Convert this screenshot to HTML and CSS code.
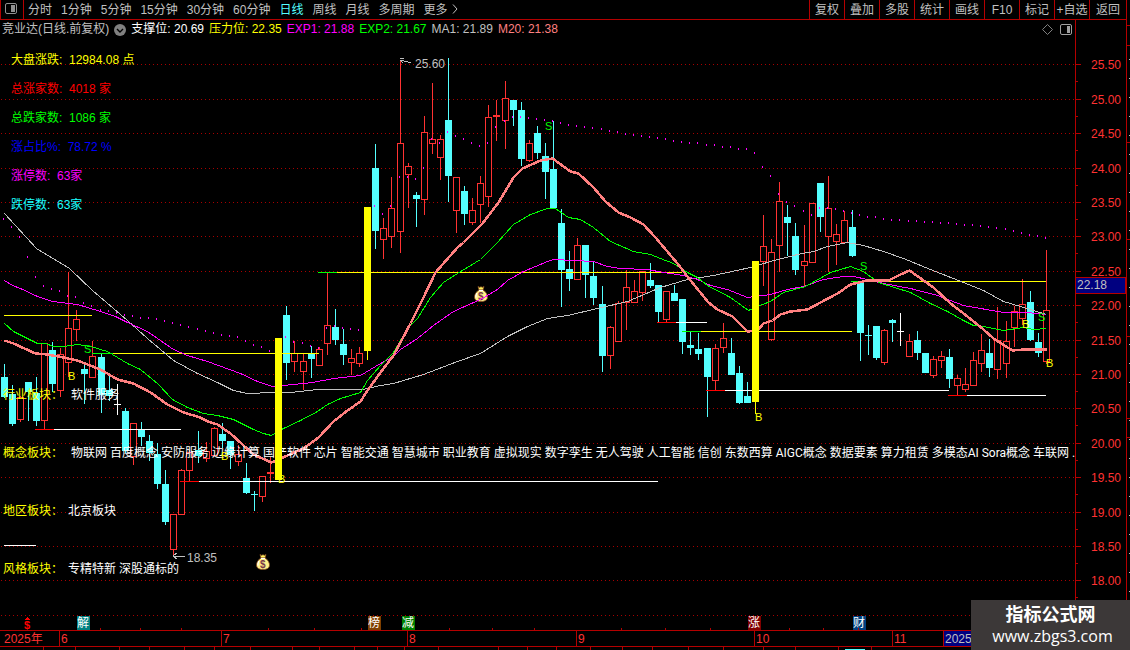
FILE: index.html
```html
<!DOCTYPE html>
<html lang="zh">
<head>
    <meta charset="UTF-8">
    <meta name="viewport" content="width=device-width, initial-scale=1.0">
    <title>竞业达 日线</title>
    <link rel="stylesheet" href="styles.css">
</head>
<body>
    <div class="app">
        <header class="toolbar">
            <button class="tool-icon" aria-label="侧栏">
                <svg width="12" height="11" viewBox="0 0 12 11"><rect x="0.5" y="0.5" width="11" height="10" rx="1.5" fill="none" stroke="#909090"/><rect x="6" y="2" width="4" height="7" fill="#909090"/></svg>
            </button>
            <nav class="periods">
                <button>分时</button>
                <button>1分钟</button>
                <button>5分钟</button>
                <button>15分钟</button>
                <button>30分钟</button>
                <button>60分钟</button>
                <button class="active">日线</button>
                <button>周线</button>
                <button>月线</button>
                <button>多周期</button>
                <button>更多<svg class="more" width="6" height="10" viewBox="0 0 6 10"><path d="M1 0.5L5 5L1 9.5" fill="none" stroke="currentColor"/></svg></button>
            </nav>
            <div class="actions">
                <button>复权</button>
                <button>叠加</button>
                <button>多股</button>
                <button>统计</button>
                <button>画线</button>
                <button>F10</button>
                <button>标记</button>
                <button>+自选</button>
                <button>返回</button>
            </div>
        </header>

        <main class="chart">
            <div class="info">
                <span class="grey">竞业达(日线.前复权)</span>
                <button class="drop" aria-label="指标菜单">
                    <svg width="12" height="12" viewBox="0 0 12 12"><circle cx="6" cy="6" r="6" fill="#808080"/><path d="M3 5L6 8L9 5" fill="none" stroke="#000" stroke-width="1.4"/></svg>
                </button>
                <span class="white">支撑位: 20.69</span>
                <span class="yellow">压力位: 22.35</span>
                <span class="magenta">EXP1: 21.88</span>
                <span class="green">EXP2: 21.67</span>
                <span class="grey">MA1: 21.89</span>
                <span class="salmon">M20: 21.38</span>
                <div class="info-icons">
                    <svg width="11" height="11" viewBox="0 0 11 11"><path d="M5.5 0.5L10.5 5.5L5.5 10.5L0.5 5.5Z" fill="none" stroke="#808080"/></svg>
                    <svg width="12" height="11" viewBox="0 0 12 11"><rect x="0.5" y="0.5" width="11" height="10" rx="1.5" fill="none" stroke="#a0a0a0"/><rect x="7" y="2" width="3" height="7" fill="#a0a0a0"/></svg>
                </div>
            </div>

            <div class="plot" id="plot">
                <svg id="layer-main"></svg>
                <ul class="market">
                    <li class="yellow">大盘涨跌:&nbsp; 12984.08 点</li>
                    <li class="red">总涨家数:&nbsp; 4018 家</li>
                    <li class="green">总跌家数:&nbsp; 1086 家</li>
                    <li class="blue">涨占比%:&nbsp; 78.72 %</li>
                    <li class="magenta">涨停数:&nbsp; 63家</li>
                    <li class="cyan">跌停数:&nbsp; 63家</li>
                </ul>
                <dl class="sectors">
                    <dt>行业板块：</dt><dd>&nbsp;软件服务</dd>
                    <dt>概念板块：</dt><dd>&nbsp;物联网 百度概念 安防服务 边缘计算 国产软件 芯片 智能交通 智慧城市 职业教育 虚拟现实 数字孪生 无人驾驶 人工智能 信创 东数西算 AIGC概念 数据要素 算力租赁 多模态AI Sora概念 车联网 .</dd>
                    <dt>地区板块：</dt><dd>北京板块</dd>
                    <dt>风格板块：</dt><dd>专精特新 深股通标的</dd>
                </dl>
                <svg id="layer-top"></svg>
            </div>

            <div class="prices">
                <svg id="price-axis"></svg>
            </div>

            <div class="dates">
                <span class="year">2025年</span>
                <span>6</span>
                <span>7</span>
                <span>8</span>
                <span>9</span>
                <span>10</span>
                <span>11</span>
                <span class="now">2025</span>
            </div>
        </main>

        <footer class="tabs">
            <i></i><i></i><i></i><i></i><i></i><i></i><i></i><i></i><i></i><i></i>
            <i></i><i></i><i></i><i></i><i></i><i></i><i></i><i></i><i></i><i></i>
            <i></i><i></i><i></i><i></i><i class="on"></i><i></i>
        </footer>
    </div>

    <aside class="side">
        <svg width="3" height="650" viewBox="0 0 3 650" shape-rendering="crispEdges">
            <path d="M0 25.5H3M0 45.5H3M0 142.5H3M0 239.5H3M0 336.5H3M0 418.5H3M0 437.5H3" stroke="#b40000"/>
            <path d="M2.5 59V650" stroke="#c0c0c0" stroke-dasharray="1 18"/>
        </svg>
    </aside>

    <div class="watermark">
        <strong>指标公式网</strong>
        <span>www.zbgs3.com</span>
    </div>

    <script src="chart.js"></script>
</body>
</html>
```
FILE: styles.css
```css
:root {
    --line: #b40000;
    --up: #ff3232;
    --down: #54ffff;
    --grey: #c0c0c0;
}

* {
    margin: 0;
    padding: 0;
    box-sizing: border-box;
}

html, body {
    width: 100%;
    height: 100%;
    overflow: hidden;
    background: #000;
}

body {
    display: flex;
    color: var(--grey);
    font-family: "Liberation Sans", "Noto Sans CJK SC", sans-serif;
    font-size: 12px;
}

button {
    background: none;
    border: none;
    color: inherit;
    font: inherit;
    white-space: nowrap;
    cursor: pointer;
}

svg {
    display: block;
}

.app {
    flex: 1;
    min-width: 0;
    height: 100%;
    display: flex;
    flex-direction: column;
}

/* 顶部工具栏 */
.toolbar {
    flex: none;
    display: flex;
    height: 20px;
    border-bottom: 1px solid var(--line);
    border-left: 1px solid var(--line);
}

.toolbar button {
    height: 19px;
    line-height: 19px;
}

.tool-icon {
    width: 23px;
    padding: 0 6px 2px 4px;
    border-right: 1px solid var(--line);
}

.periods {
    display: flex;
    gap: 9px;
    padding-top: 1px;
    padding-left: 4px;
}

.periods .active {
    color: var(--down);
}

.more {
    display: inline-block;
    margin-left: 4px;
}

.actions {
    display: flex;
    margin-left: auto;
}

.actions button {
    width: 35px;
    padding-top: 1px;
    border-left: 1px solid var(--line);
}

.actions button:last-child {
    width: 37px;
}

/* 主图 */
.chart {
    flex: 1;
    min-height: 0;
    display: grid;
    grid-template-columns: minmax(0, 1fr) 51px;
    grid-template-rows: 19px minmax(0, 1fr) 16px;
}

.info {
    display: flex;
    align-items: center;
    gap: 5px;
    padding: 0 3px 0 2px;
    line-height: 17px;
    white-space: nowrap;
}

.drop {
    width: 12px;
    height: 12px;
}

.info-icons {
    display: flex;
    gap: 7px;
    margin-left: auto;
}

.plot {
    position: relative;
    grid-row: 2;
    overflow: hidden;
}

#layer-main, #layer-top {
    position: absolute;
    top: 0;
    left: 0;
    width: 100%;
    height: 100%;
}

.market {
    position: absolute;
    top: 7px;
    left: 11px;
    list-style: none;
    line-height: 29px;
}

.sectors {
    position: absolute;
    top: 327px;
    left: 3px;
    right: 0;
    display: grid;
    grid-template-columns: 65px 1fr;
    font-family: Roboto, "Noto Sans CJK SC", sans-serif;
    line-height: 58px;
    white-space: nowrap;
}

.sectors dt {
    color: #ff0;
}

.sectors dd {
    color: #fff;
}

.prices {
    grid-column: 2;
    grid-row: 1 / 3;
    border-left: 1px solid var(--line);
}

#price-axis {
    width: 100%;
    height: 100%;
}

.dates {
    grid-column: 1 / 3;
    display: grid;
    grid-template-columns: 59fr 162fr 186fr 169fr 178fr 138fr 51fr 183fr;
    border-top: 1px solid var(--line);
    color: var(--up);
    line-height: 16px;
}

.dates span {
    height: 15px;
    padding-left: 1px;
    border-left: 1px solid var(--line);
}

.dates .year {
    padding-left: 4px;
    border: none;
}

.dates .now {
    background: #000080;
    color: var(--grey);
}

.tabs {
    flex: none;
    display: grid;
    grid-template-columns: 42fr 31fr 42fr 29fr 34fr 29fr 34fr 41fr 26fr 33fr 23fr 26fr 32fr 58fr 28fr 28fr 32fr 31fr 29fr 35fr 33fr 39fr 31fr 41fr 32fr 244fr;
    height: 4px;
    border-top: 1px solid var(--line);
}

.tabs i {
    border-right: 1px solid var(--line);
}

.tabs .on {
    background: linear-gradient(var(--down), var(--down)) 6px 2px / 20px 1px no-repeat;
}

.side {
    width: 4px;
    border-left: 1px solid var(--line);
}

/* 右下角水印 */
.watermark {
    position: fixed;
    right: 0;
    bottom: 0;
    width: 159px;
    height: 50px;
    padding-top: 4px;
    background: #3c3838;
    color: #fff;
    text-align: center;
}

.watermark strong {
    display: block;
    font-size: 18px;
    line-height: 22px;
}

.watermark span {
    display: block;
    padding-left: 4px;
    font-family: "Open Sans", sans-serif;
    font-size: 16px;
    line-height: 20px;
}

.white { color: #fff; }
.grey { color: var(--grey); }
.yellow { color: #ff0; }
.red { color: #f00; }
.green { color: #0f0; }
.blue { color: #00f; }
.magenta { color: #f0f; }
.cyan { color: #1cffff; }
.salmon { color: #ff8080; }
```
FILE: chart.js
```js
// 设计坐标：绘图区 1075 x 591，顶部偏移 39
const BASE_W = 1075;
const BASE_H = 591;
const TOP = 39;
const UP = '#ff3232';
const DOWN = '#54ffff';
const LINE = '#b40000';

// K线: 类型 最高 实体上 实体下 最低
const candles = `
d 364 377 397 398|d 385 394 424 426|u 396 397 419 421|d 382 382 392 421|d 377 393 421 426
u 343 343 420 429|d 342 350 384 392|u 348 354 390 396|u 272 328 362 376|u 310 319 329 340
d 365 369 374 404|u 341 356 377 377|d 354 357 395 413|d 373 390 396 401|w 384 404 404 415
d 408 411 451 453|u 423 423 456 464|d 422 430 437 446|d 435 441 453 461|d 443 454 484 489
d 470 484 522 525|u 514 514 549 556|u 469 470 514 514|u 450 452 470 481|d 431 450 456 463
u 442 451 458 461|u 427 428 455 455|d 423 434 441 448|d 441 441 455 469|u 445 454 461 465
d 463 478 493 494|d 491 494 494 511|u 476 476 496 501|u 457 472 474 483|y 338 338 480 480
d 306 315 363 380|u 341 353 361 371|u 353 361 371 389|d 346 353 359 378|u 347 349 365 365
u 272 325 343 354|d 309 327 340 345|d 329 344 355 365|u 349 358 362 374|u 347 353 363 366
y 207 207 351 360|d 144 168 231 249|u 218 228 239 258|u 177 208 236 247|u 60 143 231 252
u 163 166 174 207|d 192 195 199 227|u 116 132 199 214|u 83 139 143 153|u 135 139 157 179
d 58 120 176 202|u 177 177 210 232|d 186 191 214 225|u 198 210 222 224|u 176 183 204 222
u 105 117 196 206|u 100 115 117 141|u 81 98 120 148|d 100 100 110 126|d 102 110 159 166
u 140 143 160 161|d 126 133 153 159|d 143 156 172 199|d 121 169 208 208|d 209 223 270 307
d 251 269 279 291|u 238 245 279 279|d 245 245 275 298|d 262 276 298 305|d 286 304 356 372
u 326 327 355 368|u 301 303 341 341|u 270 287 302 329|u 280 291 302 302|u 271 271 292 300
d 263 280 286 288|d 285 285 312 322|u 291 291 319 322|d 285 293 301 301|d 299 299 342 354
d 332 345 348 355|d 333 349 354 360|d 348 348 377 417|u 344 348 380 390|u 323 338 347 352
d 338 353 375 375|d 366 373 403 404|d 382 396 403 403|y 261 261 402 414|u 215 246 261 285
u 239 252 339 340|u 182 201 245 271|d 205 217 223 256|d 223 236 270 275|u 225 261 265 286
u 203 203 262 262|d 183 183 217 232|u 176 208 236 271|u 224 234 241 264|u 211 220 242 242
d 210 227 256 257|d 282 282 333 361|d 325 335 335 355|d 326 326 358 360|u 329 330 362 364
d 319 320 323 342|w 313 331 331 346|u 334 341 356 356|d 331 340 353 360|d 353 353 373 373
u 356 359 375 377|u 351 356 360 367|d 349 357 379 388|u 375 378 385 395|u 368 384 389 391
u 352 360 385 385|u 334 350 363 371|d 339 353 368 377|u 307 340 369 378|u 321 341 363 377
u 306 311 327 346|u 279 304 318 324|d 291 302 340 341|d 333 342 353 357|u 250 310 361 363
`.trim().split(/[|\n]/).map(s => {
    const p = s.split(' ');
    return [p[0], +p[1], +p[2], +p[3], +p[4]];
});

// 均线
const curves = [
    { color: '#c0c0c0', width: 1, pts: '4,213 36,248 69,268 92,290 127,320 147,338 173,360 197,373 217,382 233,390 247,393 273,392 290,392 317,389 362,389 380,385 393,383 423,374 457,361 480,353 507,336 527,326 547,318 567,315 597,308 627,301 660,287 687,279 713,275 750,267 770,261 797,254 813,251 827,246 847,242 863,245 883,251 903,258 930,269 963,282 983,290 1003,301 1020,306 1033,310 1046,314' },
    { color: '#ff00ff', width: 1, pts: '4,280 12,285 20,288 37,296 52,301 77,304 100,311 115,316 127,322 147,331 160,340 173,349 187,355 207,361 240,373 257,381 272,386 283,385 312,382 333,378 360,375 380,363 393,356 400,349 417,338 433,325 453,311 480,299 497,289 507,280 523,271 547,261 553,259 593,261 607,266 620,268 647,269 663,272 683,275 697,279 710,285 727,289 747,297 770,294 787,289 803,286 823,279 843,276 853,276 867,279 883,283 910,288 937,295 963,305 1003,312 1027,312 1046,314' },
    { color: '#00ff00', width: 1, pts: '4,323 13,331 37,343 45,343 53,346 63,346 77,344 90,346 107,351 127,363 140,369 157,383 172,399 187,407 203,413 217,415 233,419 253,429 263,433 271,435 283,428 300,420 317,411 327,404 340,398 360,392 367,380 380,365 393,352 407,328 417,318 430,297 443,282 457,273 480,259 497,242 513,224 530,214 547,208 555,208 568,217 580,219 593,227 610,241 633,251 650,254 660,258 673,263 687,272 697,277 707,285 730,297 748,310 757,306 770,301 783,292 805,286 830,272 850,266 863,271 878,282 910,292 930,303 947,311 963,320 973,325 983,326 1003,330 1023,327 1033,329 1046,328' },
    { color: '#ff8080', width: 2.5, pts: '4,340 13,343 35,353 47,354 63,357 77,360 87,364 100,369 117,379 133,383 150,392 167,404 183,412 200,417 207,421 217,424 230,433 253,454 271,462 287,455 303,448 318,437 333,421 347,410 360,401 367,390 380,372 393,355 410,323 423,297 435,272 457,247 463,242 482,223 498,202 513,177 522,168 540,160 552,158 570,171 578,173 593,187 605,201 618,212 630,217 643,224 655,237 677,263 690,280 708,302 717,309 732,316 747,331 757,330 763,323 772,320 780,314 790,311 807,309 820,302 837,293 850,284 867,280 888,280 900,274 909,270 933,287 950,303 967,316 983,329 993,338 1012,350 1023,349 1046,349' }
];

// 成本点线，每根K线一个点
const dots = [
    218, 226, 236, 256, 276, 285, 288, 290, 295, 296, 302, 305, 309, 310, 312, 314, 315, 317, 317, 318,
    320, 322, 324, 326, 328, 330, 332, 334, 335, 336, 340, 344, 346, 350, 343, 336, 341, 342, 345, 347,
    327, 325, 327, 328, 329, 260, 205, 213, 205, 176, 176, 178, 167, 138, 142, 131, 135, 138, 142, 145,
    142, 126, 120, 116, 116, 117, 118, 119, 120, 122, 124, 125, 126, 127, 128, 130, 131, 133, 134, 135,
    136, 137, 138, 140, 141, 142, 142, 144, 144, 146, 146, 148, 148, 152, 166, 175, 193, 201, 205, 210,
    214, 207, 207, 208, 210, 212, 214, 216, 216, 218, 219, 219, 220, 220, 221, 221, 222, 222, 223, 224,
    224, 225, 226, 227, 228, 230, 232, 234, 235, 237
];

// 支撑/压力线: x1, 变色点, x2, y, 起始色, 颜色
const levels = [
    [4, 4, 92, 315, '#ff0', '#ff0'],
    [92, 113, 319, 353, '#0f0', '#ff0'],
    [318, 337, 682, 272, '#0f0', '#ff0'],
    [35, 54, 181, 429, '#f00', '#fff'],
    [180, 199, 658, 481, '#f00', '#fff'],
    [4, 4, 36, 545, '#fff', '#fff'],
    [657, 676, 707, 322, '#f00', '#fff'],
    [682, 701, 852, 331, '#0f0', '#ff0'],
    [706, 725, 949, 390, '#f00', '#fff'],
    [851, 870, 1046, 281, '#0f0', '#ff0'],
    [948, 967, 1046, 395, '#f00', '#fff']
];

const signals = [
    ['S', 88, 349], ['S', 549, 126], ['S', 864, 266], ['S', 1042, 317],
    ['B', 72, 376], ['B', 225, 456], ['B', 282, 479], ['B', 759, 417], ['B', 1026, 324], ['B', 1050, 363]
];

const badges = [
    ['解', 77, '#008080'], ['榜', 368, '#804000'], ['减', 402, '#008000'],
    ['涨', 748, '#800000'], ['财', 853, '#004080']
];

const ticks = [100, 140, 181, 268, 314, 361, 449, 492, 534, 621, 665, 710, 789, 823, 858];

const plot = document.getElementById('plot');
let sx = 1;
let sy = 1;
const X = x => Math.round(x * sx);
const Y = y => Math.round((y - TOP) * sy);

function rect(x, y, w, h, fill) {
    return `<rect x="${x}" y="${y}" width="${w}" height="${h}" fill="${fill}"/>`;
}

function text(x, y, str, fill, size = 12) {
    return `<text x="${x}" y="${y}" fill="${fill}" font-size="${size}">${str}</text>`;
}

function drawCandle([type, high, top, bottom, low], i) {
    const x = X(Math.floor(4.1 + i * 8.08));
    const h = Y(high), t = Y(top), b = Y(bottom), l = Y(low);
    if (type === 'y') {
        return rect(x - 3, t, 7, b - t, '#ff0') + rect(x, b, 1, l - b, '#ff0');
    }
    const color = type === 'u' ? UP : type === 'd' ? DOWN : '#fff';
    if (b - t < 3) {
        return rect(x, h, 1, l - h, color) + rect(x - 3, t, 7, Math.max(1, b - t), color);
    }
    if (type === 'd') {
        return rect(x, h, 1, l - h, color) + rect(x - 3, t, 7, b - t, color);
    }
    return rect(x, h, 1, t - h, color) + rect(x, b, 1, l - b + 1, color) +
        `<rect x="${x - 2.5}" y="${t + 0.5}" width="6" height="${b - t}" fill="#000" stroke="${color}"/>`;
}

function moneyBag(x, y) {
    return `<g transform="translate(${X(x) - 7} ${Y(y) - 8})" shape-rendering="auto">
        <path d="M4 0.5L6 1.5L7 0.5L8 1.5L10 0.5L9 4H5Z" fill="#fff45c" stroke="#8a4a20" stroke-width="0.7"/>
        <path d="M5 4H9C12 6 13.5 8.5 13.5 11C13.5 14 11 15.5 7 15.5S0.5 14 0.5 11C0.5 8.5 2 6 5 4Z" fill="#fff08a" stroke="#8a4a20" stroke-width="0.8"/>
        <path d="M3 7Q1.5 9 2 11.5" fill="none" stroke="#fff" stroke-width="1.2"/>
        <path d="M5 4.5H9" stroke="#fff" stroke-width="1.2"/>
        <text x="4" y="13.5" font-size="10" font-weight="bold" fill="#7a3848">$</text>
    </g>`;
}

function draw() {
    sx = plot.clientWidth / BASE_W;
    sy = plot.clientHeight / BASE_H;
    let main = '';
    let top = '';
    let axis = '';

    // 网格和价格刻度
    for (let k = 0; k < 17; k++) {
        const y = Math.floor(64.8 + 34.4 * k);
        main += `<path d="M1 ${Y(y) + 0.5}H${plot.clientWidth}" stroke="#a80000" stroke-dasharray="1 3"/>`;
        if (k < 16) {
            const ay = Y(y) + 19;
            axis += rect(0, ay, 5, 1, LINE) + rect(0, Y(y + 17) + 19, 2, 1, LINE);
            axis += text(15, ay + 5, (25.5 - k * 0.5).toFixed(2), UP);
        }
    }
    const py = Y(277) + 19;
    axis += `<rect x="-0.5" y="${py + 0.5}" width="50" height="16" fill="#000080" stroke="${LINE}"/>`;
    axis += text(1, py + 12, '22.18', '#c0c0c0');

    candles.forEach((c, i) => {
        if (c[0] === 'y') top += drawCandle(c, i);
        else main += drawCandle(c, i);
    });

    levels.forEach(([x1, xm, x2, y, head, color]) => {
        main += rect(X(x1), Y(y), X(xm) - X(x1), 1, head) + rect(X(xm), Y(y), X(x2) - X(xm), 1, color);
    });

    // 资金标记在均线之下
    main += moneyBag(481, 294) + moneyBag(263, 562);

    curves.forEach(c => {
        const pts = c.pts.split(' ').map(p => {
            const [x, y] = p.split(',');
            return `${X(x) + 0.5},${Y(y) + 0.5}`;
        }).join(' ');
        main += `<polyline points="${pts}" fill="none" stroke="${c.color}" stroke-width="${c.width}"/>`;
    });

    dots.forEach((y, i) => {
        main += rect(X(Math.floor(3.1 + i * 8.08)), Y(y), 1, 2, '#f0f');
    });

    // 高低点标注
    main += `<path d="M${X(400)} ${Y(59)}l4 -1M${X(400)} ${Y(60)}l3 3M${X(401)} ${Y(60)}l10 3" stroke="#c0c0c0" fill="none"/>`;
    main += text(X(415), Y(68), '25.60', '#c0c0c0');
    main += `<path d="M${X(173)} ${Y(556) + 0.5}h12M${X(173)} ${Y(556)}l4 -3M${X(173)} ${Y(556)}l4 3" stroke="#c0c0c0" fill="none"/>`;
    main += text(X(187), Y(562), '18.35', '#c0c0c0');

    signals.forEach(([s, x, y]) => {
        top += text(X(x) - 4, Y(y) + 4, s, s === 'S' ? '#0f0' : '#ff0', 11);
    });

    badges.forEach(([s, x, color]) => {
        top += rect(X(x), Y(616), 13, 14, color) + text(X(x), Y(627), s, '#fff');
    });
    top += `<text x="${X(24)}" y="${Y(629)}" fill="#f00" font-size="11" font-weight="bold">$</text>`;
    top += `<path d="M${X(27)} ${Y(617)}l3 3h-6z" fill="#f00"/>`;
    ticks.forEach(x => {
        top += rect(X(x), plot.clientHeight - 2, 1, 2, LINE);
    });

    document.getElementById('layer-main').innerHTML = `<g shape-rendering="crispEdges">${main}</g>`;
    document.getElementById('layer-top').innerHTML = `<g shape-rendering="crispEdges">${top}</g>`;
    document.getElementById('price-axis').innerHTML = `<g shape-rendering="crispEdges">${axis}</g>`;
}

window.addEventListener('resize', draw);
draw();
```
